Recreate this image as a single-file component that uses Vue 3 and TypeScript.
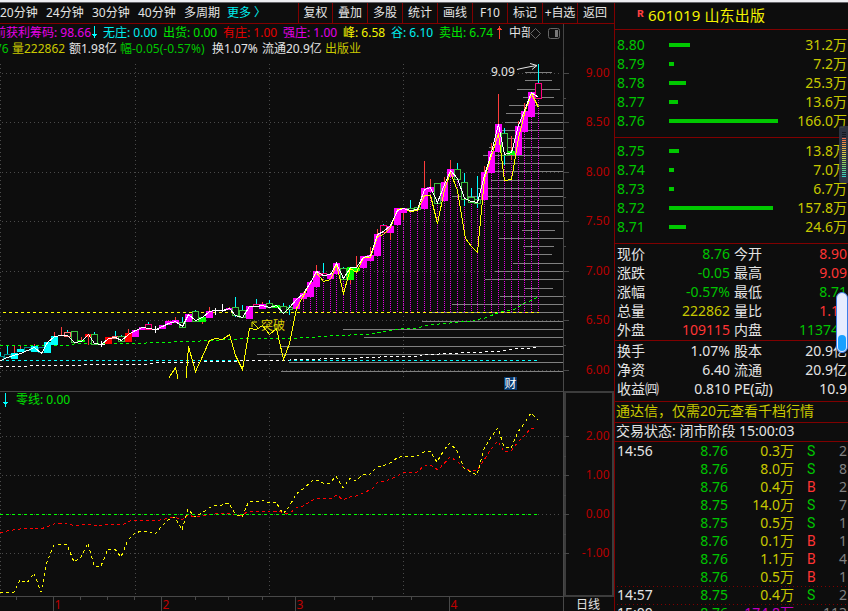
<script setup lang="ts">
type Kind = 'm' | 'g' | 'r' | 'c' | 'hg' | 'hp' | 'hs' | 'ht' | 'x'
type Wick = 'cyan' | 'red' | 'white' | ''
type Candle = [x: number, kind: Kind, top: number, bottom: number, wick?: Wick, wickTop?: number, wickBottom?: number]

const periods = ['20分钟', '24分钟', '30分钟', '40分钟', '多周期']
const actions = ['复权', '叠加', '多股', '统计', '画线', 'F10', '标记', '+自选', '返回']

const indicators = [
  { text: '前获利筹码: 98.66', tone: 'magenta' },
  { text: '', tone: 'down' },
  { text: '无庄: 0.00', tone: 'cyan' },
  { text: '出货: 0.00', tone: 'lime' },
  { text: '有庄: 1.00', tone: 'deepred' },
  { text: '强庄: 1.00', tone: 'magenta' },
  { text: '峰: 6.58', tone: 'yellow' },
  { text: '谷: 6.10', tone: 'cyan' },
  { text: '卖出: 6.74', tone: 'lime' },
  { text: '', tone: 'up' },
  { text: '中部', tone: 'plain' },
]
const summary = [
  { text: '76', tone: 'green' },
  { text: '量222862', tone: 'gold' },
  { text: '额1.98亿', tone: 'plain' },
  { text: '幅-0.05(-0.57%)', tone: 'green' },
  { text: '换1.07%', tone: 'plain' },
  { text: '流通20.9亿', tone: 'plain' },
  { text: '出版业', tone: 'gold' },
]

const asks = [
  { price: '8.80', bar: 21, volume: '31.2万' },
  { price: '8.79', bar: 5, volume: '7.2万' },
  { price: '8.78', bar: 17, volume: '25.3万' },
  { price: '8.77', bar: 9, volume: '13.6万' },
  { price: '8.76', bar: 109, volume: '166.0万' },
]
const bids = [
  { price: '8.75', bar: 10, volume: '13.8万' },
  { price: '8.74', bar: 5, volume: '7.0万' },
  { price: '8.73', bar: 5, volume: '6.7万' },
  { price: '8.72', bar: 104, volume: '157.8万' },
  { price: '8.71', bar: 17, volume: '24.6万' },
]
const quotes = [
  ['现价', '8.76', 'green', '今开', '8.90', 'red'],
  ['涨跌', '-0.05', 'green', '最高', '9.09', 'red'],
  ['涨幅', '-0.57%', 'green', '最低', '8.71', 'green'],
  ['总量', '222862', 'gold', '量比', '1.15', 'red'],
  ['外盘', '109115', 'red', '内盘', '113747', 'green'],
]
const basics = [
  ['换手', '1.07%', 'plain', '股本', '20.9亿', 'plain'],
  ['净资', '6.40', 'plain', '流通', '20.9亿', 'plain'],
  ['收益㈣', '0.810', 'plain', 'PE(动)', '10.9', 'plain'],
]
const ticks = [
  { time: '14:56', price: '8.76', vol: '0.3万', side: 'S', n: '2' },
  { time: '', price: '8.76', vol: '8.0万', side: 'S', n: '8' },
  { time: '', price: '8.76', vol: '0.4万', side: 'B', n: '2' },
  { time: '', price: '8.75', vol: '14.0万', side: 'S', n: '7' },
  { time: '', price: '8.75', vol: '0.5万', side: 'S', n: '1' },
  { time: '', price: '8.76', vol: '0.1万', side: 'B', n: '1' },
  { time: '', price: '8.76', vol: '1.1万', side: 'B', n: '4' },
  { time: '', price: '8.76', vol: '0.5万', side: 'B', n: '1' },
  { time: '14:57', price: '8.75', vol: '0.4万', side: 'S', n: '2' },
  { time: '15:00', price: '8.76', vol: '174.8万', side: '', n: '113' },
]

const priceAxis = [
  [73, '9.00'], [122, '8.50'], [172, '8.00'], [221, '7.50'], [271, '7.00'], [320, '6.50'], [370, '6.00'],
] as [number, string][]
const lowerAxis = [[436, '2.00'], [475, '1.00'], [514, '0.00'], [553, '-1.00']] as [number, string][]
const minorTicks = [98, 147, 197, 246, 296, 345, 456, 495, 534]
const gridX = [0, 135, 269, 403]
const months = [[53, '1'], [161, '2'], [295, '3'], [449, '4']] as [number, string][]
const weekTicks = [16, 80, 107, 134, 195, 228, 262, 334, 372, 411]

// Chip distribution: y, left edge, right edge
const chips: [number, number, number][] = [
  [72, 525, 552], [80, 525, 552], [89, 517, 560], [97, 523, 554], [105, 509, 563], [113, 506, 563],
  [122, 505, 563], [130, 501, 563], [138, 503, 563], [147, 489, 563], [155, 483, 563], [163, 492, 563],
  [171, 487, 563], [180, 491, 563], [188, 477, 563], [196, 452, 563], [205, 490, 563], [213, 498, 563],
  [221, 511, 563], [230, 522, 555], [238, 498, 563], [246, 523, 554], [254, 525, 552], [263, 513, 563],
  [271, 495, 563], [279, 485, 563], [288, 524, 553], [296, 500, 563], [304, 452, 563], [312, 430, 563],
  [321, 422, 563], [329, 343, 563], [337, 364, 563], [346, 280, 563], [354, 257, 563], [362, 289, 563],
  [371, 281, 563],
]

const candles: Candle[] = [
  [0, 'ht', 356, 360, 'cyan', 352], [7, 'ht', 354, 357, 'cyan', 346], [14, 'c', 353, 359, 'red', 346],
  [20, 'c', 349, 352, 'red', 346], [27, 'ht', 347, 350], [34, 'c', 346, 352, 'red', 344],
  [41, 'ht', 347, 352], [47, 'c', 342, 353], [54, 'c', 336, 345, 'red', 332],
  [61, 'r', 335, 336, 'red', 327], [67, 'hs', 332, 336, 'cyan', 330], [74, 'hg', 331, 342],
  [81, 'g', 340, 342, 'red', 337], [88, 'r', 334, 337, 'red', 334, 345], [94, 'hg', 334, 344, 'cyan', 332],
  [101, 'x', 344, 345, 'white', 341, 347], [108, 'r', 337, 344], [115, 'hs', 336, 338, 'cyan', 331],
  [121, 'hg', 336, 341, 'cyan', 335], [128, 'r', 333, 342, 'red', 329], [135, 'm', 330, 337],
  [142, 'm', 327, 330], [148, 'hp', 324, 329, 'cyan', 322], [155, 'x', 329, 330, 'white', 326, 333],
  [162, 'm', 325, 329], [168, 'm', 321, 325, 'red', 320], [175, 'm', 320, 323, 'red', 317],
  [182, 'hg', 322, 327, 'cyan', 317], [188, 'm', 314, 322], [195, 'hg', 311, 321, 'cyan', 310],
  [202, 'g', 317, 322, 'red', 317, 324], [209, 'm', 311, 318, 'red', 307],
  [215, 'x', 310, 311, 'white', 308, 315], [222, 'x', 310, 311, 'white', 304, 312],
  [229, 'm', 308, 310, 'red', 307], [235, 'hg', 307, 315, 'cyan', 297, 317], [242, 'hg', 310, 317, 'cyan', 305],
  [249, 'm', 306, 319], [256, 'hp', 304, 306, 'cyan', 299], [262, 'm', 304, 309, 'red', 302],
  [269, 'hg', 303, 307, 'cyan', 300], [276, 'g', 305, 308], [283, 'hg', 306, 312, 'cyan', 303],
  [289, 'hg', 307, 309, 'cyan', 305, 315], [296, 'm', 298, 309], [303, 'm', 293, 299, 'red', 292, 301],
  [310, 'm', 282, 297], [316, 'm', 271, 287, 'red', 265], [323, 'hp', 273, 275, 'cyan', 263],
  [330, 'm', 274, 279], [336, 'm', 263, 274], [343, 'hg', 268, 279, 'cyan', 267],
  [350, 'g', 267, 280, 'red', 267, 284], [356, 'g', 268, 271, 'red', 256], [363, 'm', 256, 268],
  [370, 'm', 255, 261, 'red', 247], [377, 'm', 234, 256, 'red', 229], [383, 'hp', 225, 232, 'cyan', 224],
  [390, 'm', 226, 233, 'red', 225, 240], [397, 'm', 208, 225], [403, 'm', 208, 213, 'red', 208, 220],
  [410, 'hg', 208, 210, 'cyan', 200], [417, 'hg', 207, 209], [424, 'm', 188, 209, 'red', 161],
  [430, 'm', 187, 192, 'red', 179], [437, 'hg', 183, 203], [444, 'm', 182, 201, 'red', 177],
  [450, 'm', 169, 177, 'red', 160], [457, 'hg', 169, 179, 'cyan', 163], [464, 'hg', 182, 199, 'cyan', 173, 206],
  [471, 'hg', 197, 202, 'cyan', 188], [477, 'hg', 199, 203, 'cyan', 176, 208], [484, 'm', 172, 200, 'red', 166],
  [491, 'm', 151, 173, 'red', 143], [498, 'm', 124, 152, 'red', 94], [504, 'hg', 133, 155, 'cyan', 128, 165],
  [511, 'g', 151, 155, 'red', 136, 160], [518, 'm', 126, 155, 'red', 121], [524, 'm', 111, 132, 'red', 103],
  [531, 'm', 92, 117], [538, 'hp', 83, 98, 'cyan', 64, 83],
]
const stems = candles.filter((c) => c[0] >= 303)

const fastLine =
  '0,360 7,357 13,355 20,353 27,350 34,347 41,353 47,342 54,336 61,335 67,335 74,342 81,341 88,334 94,343 101,344 108,338 115,337 121,340 128,334 135,330 142,327 148,328 155,329 162,326 168,323 175,321 182,326 188,314 195,320 202,317 209,311 215,310 222,310 229,308 235,315 242,317 249,306 256,306 262,305 269,307 276,305 283,313 289,307 296,299 303,293 310,282 316,271 323,275 330,274 336,263 343,278 350,267 356,267 363,257 370,255 377,234 383,231 390,225 397,210 403,208 410,210 417,209 424,189 430,187 437,202 444,184 450,170 457,178 464,198 471,201 477,202 484,175 491,152 498,124 504,154 511,152 518,125 524,110 531,92 538,97'
const slowLineHead = '168,378 175,367 177.5,378'
const slowLine =
  '185.5,378 188,346 195,371 202,356 209,340 215,338 222,339 229,334 235,355 242,369 249,328 256,329 262,325 269,334 276,328 283,359 289,343 296,308 303,295 310,282 316,272 323,281 330,279 336,264 343,293 350,268 356,272 363,257 370,257 377,236 383,234 390,227 397,209 403,208 410,211 417,210 424,195 430,195 437,223 444,189 450,172 457,190 462,220 465,238 471,246 477,252 480,220 484,178 491,155 498,133 504,180 511,179 518,138 524,113 531,93 538,107'
const costLine = '0,345 70,345 74,344 133,343.5 200,341 240,339 300,338 330,336 370,334 400,329 418,328 428,325 450,323 470,321 485,318 500,312 515,309 525,303 530,301 538,297'
const baseLine = '0,366 30,366 34,365 82,365 86,364 150,364 154,363 200,362 240,361 290,360 320,359 350,358.5 400,356 420,356 426,354.6 460,353 485,352 500,351 515,349 530,348 538,347'
const lowerYellow =
  '0,592 14,592 20,580 27,583 34,573 41,592 47,562 54,545 61,544.5 67,544.5 74,562 81,557 88,543 94,566 101,566 108,549 115,549 121,557 128,540 135,533 142,531 148,531 155,534 162,526 168,520 175,517 182,530 188,509 195,517 202,513 209,508 215,505 222,505 229,503 235,514 242,517 249,501 256,502 262,500 269,503 276,502 283,514 289,507 296,494 303,489 312,481 317,480 323,483 330,483 336,476 343,488 350,478 356,481 363,474 370,474 377,467 383,466 390,463 397,458 403,456 410,457 417,456 424,452 430,451 437,462 444,450 450,443 457,451 464,468 471,472 477,475 484,449 491,437 498,428 504,447 511,448 518,432 524,424 531,413 538,420'
const lowerRed =
  '0,533 7,531 20,529 34,528 41,529 54,524 67,523 74,526 88,524 97,526 110,524 122,525 130,521 142,520 155,521 170,518 175,517 182,520 188,515 195,517 202,516 212,514 229,513 237,515 242,515 249,511 262,511 270,512 278,511 285,513 290,513 296,508 303,506 308,503 316,498 330,499 337,495 343,500 350,497 356,496 363,493 372,489 377,483 385,481 393,478 403,473 417,472 425,465 432,466 438,470 450,457 457,461 464,468 471,471 477,470 484,460 491,449 498,441 504,452 511,451 518,442 524,436 531,428 536,429'
</script>

<template>
  <div class="terminal">
    <div class="strip"></div>
    <div class="body">
      <main class="left">
        <nav class="menu">
          <div class="periods">
            <span v-for="p in periods" :key="p">{{ p }}</span>
            <span class="cyan">更多 〉</span>
          </div>
          <span v-for="a in actions" :key="a" class="action">{{ a }}</span>
        </nav>
        <header class="info">
          <div class="line indicators">
            <span v-for="(s, i) in indicators" :key="i" :class="s.tone">
              <template v-if="s.text">{{ s.text }}</template>
              <svg v-else width="7" height="16" viewBox="0 0 7 16" :class="['arrow', s.tone]">
                <path v-if="s.tone === 'down'" d="M3 2h1v8h2v1H5v1H4v2H3v-2H2v-1H1v-1h2z" />
                <path v-else d="M3 2h1v2h1v1h1v1H4v9H3V6H1V5h1V4h1z" />
              </svg>
            </span>
            <svg class="glyphs" width="33" height="16" viewBox="0 0 33 16">
              <path d="M5.500 4.500l5 5-5 5-5-5z" />
              <rect x="18.500" y="4.500" width="11" height="10" rx="2" />
              <rect class="solid" x="25" y="6" width="3" height="7" />
            </svg>
          </div>
          <div class="line summary">
            <span v-for="s in summary" :key="s.text" :class="s.tone">{{ s.text }}</span>
          </div>
        </header>
        <svg class="chart" width="614" height="554" viewBox="0 57 614 554">
          <g class="grid">
            <path v-for="x in gridX" :key="x" :d="`M${x + 0.5} 64V378M${x + 0.5} 413V594`" />
            <path v-for="[y] in priceAxis" :key="y" :d="`M2 ${y + 0.5}H561`" />
            <path v-for="[y] in lowerAxis" :key="y" :d="`M2 ${y + 0.5}H561`" />
          </g>
          <path v-for="c in chips" :key="c[0]" class="chip" :d="`M${c[1]} ${c[0] + 0.5}H${c[2]}`" />
          <path v-for="s in stems" :key="s[0]" class="stem" :d="`M${s[0] + 0.5} ${s[3]}V313`" />
          <path class="dash y" d="M3 312.500H539" />
          <path class="dash c" d="M0 360.500H539" />
          <polyline class="dash g" :points="costLine" />
          <polyline class="dash w" :points="baseLine" />
          <g v-for="c in candles" :key="c[0]">
            <rect v-if="c[4]" :class="['wick', c[4]]" :x="c[0]" :y="c[5]" width="1" :height="(c[6] ?? c[3]) - (c[5] ?? 0)" />
            <rect v-if="c[1].startsWith('h')" :class="['hollow', c[1]]" :x="c[0] - 2.5" :y="c[2] + 0.5" width="6" :height="c[3] - c[2]" />
            <rect v-else :class="['solid', c[1]]" :x="c[0] - 3" :y="c[2]" width="7" :height="c[3] - c[2]" />
          </g>
          <g transform="translate(0.5 0.5)">
            <polyline class="slow" :points="slowLineHead" />
            <polyline class="slow" :points="slowLine" />
            <polyline class="fast" :points="fastLine" />
          </g>
          <text class="peak" x="491" y="75.500">9.09</text>
          <path class="pointer" d="M517 69.500l4-1 5-1 5-1 6-1M530 63.500l7 2-5 4" />
          <path class="mark" d="M252 327v-5h5M252.500 322.500l6 6" />
          <text class="breakout" x="261" y="329.500">突破</text>
          <rect class="badge" x="504" y="377" width="13" height="13" />
          <text class="badge-text" x="504.500" y="388.300">财</text>

          <path class="frame" d="M0 391.500H563M563.500 57V611M0 596.500H563" />
          <rect class="pane" x="565" y="392" width="48" height="204" />
          <path v-for="[y] in priceAxis" :key="'p' + y" class="frame" :d="`M564 ${y + 0.5}h5`" />
          <path v-for="[y] in lowerAxis" :key="'l' + y" class="frame" :d="`M564 ${y + 0.5}h5`" />
          <path v-for="y in minorTicks" :key="'t' + y" class="frame" :d="`M564 ${y + 0.5}h2`" />
          <text v-for="[y, t] in priceAxis" :key="t" class="axis" x="609.500" :y="y + 4.300">{{ t }}</text>
          <text v-for="[y, t] in lowerAxis" :key="t" class="axis" x="609.500" :y="y + 4.300">{{ t }}</text>

          <path class="sub-arrow" d="M5 393h1v9h2v1H7v1H6v3H5v-3H4v-1H3v-1h2z" />
          <text class="sub-title" x="16" y="404">零线: 0.00</text>
          <polyline class="dash r" :points="lowerRed" />
          <path class="dash g" d="M0 514.500H538" />
          <polyline class="dash y" :points="lowerYellow" />

          <path v-for="x in weekTicks" :key="'w' + x" class="frame" :d="`M${x + 0.5} 597v3`" />
          <g v-for="[x, m] in months" :key="m">
            <path class="frame" :d="`M${x + 0.5} 597v14`" />
            <text class="month" :x="x + 1.500" y="609.300">{{ m }}</text>
          </g>
          <text class="cycle" x="576" y="609">日线</text>
        </svg>
      </main>

      <aside class="right">
        <h1 class="title"><sup>R</sup>601019 山东出版</h1>
        <section v-for="(book, i) in [asks, bids]" :key="i" :class="['book', i ? 'bids' : 'asks']">
          <div v-for="r in book" :key="r.price" class="level">
            <span class="green">{{ r.price }}</span>
            <i class="bar" :style="{ width: r.bar + 'px' }"></i>
            <span class="gold num">{{ r.volume }}</span>
          </div>
        </section>
        <section v-for="(rows, i) in [quotes, basics]" :key="'q' + i" :class="['facts', i ? 'basics' : 'quotes']">
          <div v-for="q in rows" :key="q[0]" class="fact">
            <span>{{ q[0] }}</span>
            <span :class="['num', q[2]]">{{ q[1] }}</span>
            <span class="second">{{ q[3] }}</span>
            <span :class="['num', q[5]]">{{ q[4] }}</span>
          </div>
        </section>
        <p class="notice">通达信，仅需20元查看千档行情</p>
        <p class="status">交易状态: 闭市阶段 15:00:03</p>
        <section class="ticks">
          <div v-for="(t, i) in ticks" :key="i" :class="['tick', { mark: i > 0 && t.time }]">
            <span>{{ t.time }}</span>
            <span class="green num">{{ t.price }}</span>
            <span :class="['num', t.side ? 'gold' : 'violet']">{{ t.vol }}</span>
            <span :class="['side', t.side === 'B' ? 'red' : 'green']">{{ t.side }}</span>
            <span class="grey num">{{ t.n }}</span>
          </div>
        </section>
      </aside>
    </div>

    <div class="meter"><i class="off"></i><i class="on"></i></div>
    <div class="slider"><i></i></div>
  </div>
</template>

<style>
body { margin: 0; background: #0d0d0d; overflow: hidden; }
</style>

<style scoped>
.terminal { position: relative; width: 848px; height: 611px; overflow: hidden; background: #0d0d0d; color: #e4e4e4; font: 12px/16px "Noto Sans", "Noto Sans CJK SC", sans-serif; }
.strip { height: 2px; background: #eeeef2; border-bottom: 1px solid #66666a; }
.body { display: flex; height: 608px; }
.left { width: 614px; height: 608px; }
.menu { display: flex; height: 20px; border-bottom: 1px solid #800000; line-height: 20px; white-space: nowrap; }
.periods { display: grid; grid-template-columns: repeat(4, 46px) 43px 71px; width: 298px; }
.action { box-sizing: border-box; width: 35px; border-left: 1px solid #800000; text-align: center; }
.action:nth-of-type(1) { width: 34px; }
.action:nth-last-child(2) { letter-spacing: -.2px; }
.info { width: 563px; height: 33px; border-right: 1px solid #444; white-space: nowrap; overflow: hidden; }
.line { display: grid; height: 16px; line-height: 17px; }
.indicators { grid-template-columns: 91px 12px 60px 60px 60px 60px 48px 48px 59px 11px 21px 32px; }
.indicators > span:first-child { margin-left: -6px; }
.indicators > .plain { overflow: hidden; }
.summary { grid-template-columns: 12px 57px 51px 92px 50px 63px 60px; line-height: 18px; }
.summary > span:first-child { margin-left: -5px; }
.arrow { display: block; }
.arrow.down { fill: #00ffff; }
.arrow.up { fill: #ff4030; margin-left: -2px; }
.glyphs { fill: none; stroke: #666; }
.glyphs .solid { fill: #777; stroke: none; }
.plain { color: #e4e4e4; }
.magenta { color: #e600e6; }
.violet { color: #c000c0; }
.cyan { color: #00f0f0; }
.lime { color: #00e600; }
.deepred { color: #e60000; }
.yellow { color: #f5f500; }
.green { color: #00c400; }
.red { color: #ff3434; }
.gold { color: #c8c800; }
.grey { color: #808080; }

.chart { display: block; font-size: 12px; }
.grid path { stroke: #4a4a4a; stroke-dasharray: 1 3; }
.chip { stroke: #808080; }
.stem { stroke: #e600e6; stroke-dasharray: 1 1; shape-rendering: crispEdges; }
.dash { fill: none; stroke-dasharray: 3 3; shape-rendering: crispEdges; }
.dash.y { stroke: #ffff00; }
.dash.c { stroke: #00ffff; }
.dash.g { stroke: #00ff00; }
.dash.w { stroke: #ffffff; }
.dash.r { stroke: #ff0000; }
.wick.cyan { fill: #00ffff; }
.wick.red { fill: #ff3c3c; }
.wick.white { fill: #ffffff; }
.solid.m { fill: #ff00ff; }
.solid.g { fill: #00ff00; }
.solid.r { fill: #ff0000; }
.solid.c { fill: #00ffff; }
.solid.x { fill: #ffffff; }
.hollow { fill: #0d0d0d; }
.hollow.hg { stroke: #3cc03c; }
.hollow.hp { stroke: #ff0080; }
.hollow.hs { stroke: #ff7070; }
.hollow.ht { stroke: #008888; }
.slow, .fast { fill: none; stroke-width: 1; shape-rendering: crispEdges; }
.slow { stroke: #ffff00; }
.fast { stroke: #ffffff; }
.peak { fill: #e4e4e4; }
.pointer { fill: none; stroke: #e4e4e4; }
.mark { fill: none; stroke: #e6e600; }
.breakout { fill: #e0d800; }
.badge { fill: #063a70; }
.badge-text { fill: #ffffff; }
.frame { fill: none; stroke: #484848; }
.pane { fill: none; stroke: #3c3c3c; stroke-width: 2; }
.axis { fill: #b80000; text-anchor: end; }
.sub-arrow { fill: #00ffff; }
.sub-title { fill: #00e000; }
.month { fill: #c00000; }
.cycle { fill: #e4e4e4; }

.right { box-sizing: border-box; width: 234px; height: 608px; border-left: 1px solid #800000; font-size: 14px; overflow: hidden; white-space: nowrap; }
.title { margin: 0; height: 26px; padding-left: 22px; border-bottom: 1px solid #800000; color: #f2f200; font-size: 15px; font-weight: 400; line-height: 24px; letter-spacing: .15px; }
.title sup { display: inline-block; width: 11px; color: #ff4040; font: bold 11px/10px "Liberation Mono", monospace; vertical-align: 4px; }
.book { border-bottom: 1px solid #800000; padding-left: 2px; }
.asks { height: 102px; padding-top: 5px; }
.bids { height: 102px; padding-top: 3px; }
.level { display: grid; grid-template-columns: 52px 120px 58px; align-items: center; height: 19px; line-height: 19px; }
.bar { height: 4px; background: #00c800; }
.num { text-align: right; }
.facts { border-bottom: 1px solid #800000; padding-left: 2px; }
.quotes { height: 96px; }
.basics { height: 60px; }
.fact { display: grid; grid-template-columns: 44px 69px 52px 65px; height: 19px; line-height: 20px; }
.second { padding-left: 4px; }
.notice, .status { margin: 0; padding-left: 1px; border-bottom: 1px solid #800000; }
.notice { height: 20px; color: #c8c800; line-height: 17px; }
.status { height: 18px; line-height: 16px; }
.tick { box-sizing: border-box; display: grid; grid-template-columns: 62px 49px 66px 20px 35px; height: 18px; padding-left: 2px; line-height: 18px; }
.tick.mark { background: repeating-linear-gradient(90deg, #800000 0 1px, transparent 1px 4px) 2px 0 / 100% 1px no-repeat; }
.side { padding-left: 13px; width: 8px; font-family: Roboto, sans-serif; }
.tick > .grey { padding-right: 2px; }

.meter { position: absolute; left: 839px; top: 126px; box-sizing: border-box; width: 9px; height: 57px; padding: 6px 2px 0 3px; border-radius: 2px 0 0 2px; background: rgba(48, 54, 70, .92); }
.meter i { display: block; }
.off { height: 6px; background: repeating-linear-gradient(#181a20 0 1px, transparent 1px 2px); }
.on { height: 39px; background: repeating-linear-gradient(transparent 0 1px, #303646 1px 2px), linear-gradient(#f06848, #e8a040 20%, #d8d048 42%, #88d060 68%, #30d0c8); }
.slider { position: absolute; left: 836px; top: 292px; box-sizing: border-box; width: 12px; height: 61px; padding-top: 42px; border: 1px solid #3d7de8; border-radius: 6px; background: #e6ecff; }
.slider i { display: block; width: 8px; height: 16px; margin-left: 1px; border-radius: 5px; background: #18a0ff; }
</style>
